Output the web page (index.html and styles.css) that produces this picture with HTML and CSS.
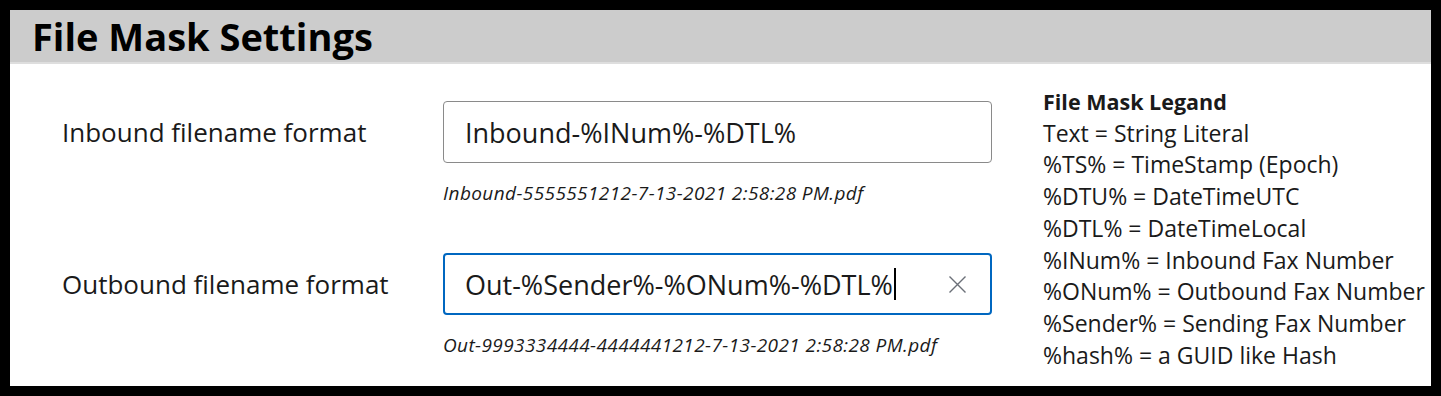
FILE: index.html
```html
<!DOCTYPE html>
<html lang="en">

<head>
    <meta charset="UTF-8" />
    <meta name="viewport" content="width=device-width, initial-scale=1.0" />
    <title>File Mask Settings</title>

    <link rel="stylesheet" href="styles.css">
</head>

<body>
    <div class="panel">
        <div class="panel-header">
            <h1>File Mask Settings</h1>
        </div>

        <div class="panel-body">
            <div class="form">
                <div class="row">
                    <label class="row-label">Inbound filename format</label>
                    <div class="field">
                        <div class="textbox">
                            <span class="textbox-value">Inbound-%INum%-%DTL%</span>
                        </div>
                        <div class="hint">Inbound-5555551212-7-13-2021 2:58:28 PM.pdf</div>
                    </div>
                </div>

                <div class="row">
                    <label class="row-label">Outbound filename format</label>
                    <div class="field">
                        <div class="textbox focused">
                            <span class="textbox-value">Out-%Sender%-%ONum%-%DTL%</span><span class="caret"></span>
                            <span class="clear">
                                <svg width="19" height="19" viewBox="0 0 19 19">
                                    <path d="M1.5 1.5 L17.5 17.5 M17.5 1.5 L1.5 17.5" stroke="#6b7078" stroke-width="1.4" fill="none" />
                                </svg>
                            </span>
                        </div>
                        <div class="hint">Out-9993334444-4444441212-7-13-2021 2:58:28 PM.pdf</div>
                    </div>
                </div>
            </div>

            <div class="legend">
                <div class="legend-title">File Mask Legand</div>
                <div>Text = String Literal</div>
                <div>%TS% = TimeStamp (Epoch)</div>
                <div>%DTU% = DateTimeUTC</div>
                <div>%DTL% = DateTimeLocal</div>
                <div>%INum% = Inbound Fax Number</div>
                <div>%ONum% = Outbound Fax Number</div>
                <div>%Sender% = Sending Fax Number</div>
                <div>%hash% = a GUID like Hash</div>
            </div>
        </div>
    </div>
</body>

</html>
```

FILE: styles.css
```css
body {
    margin: 0;
    background-color: #000;
    font-family: "Open Sans", "Noto Sans", sans-serif;
    color: #1a1a1a;
}

.panel {
    margin: 10px;
    width: 1421px;
    height: 376px;
    background: #fff;
}

.panel-header {
    height: 52px;
    background: #cccccc;
    border-bottom: 2px solid #dedede;
    display: flex;
    align-items: center;
    padding-left: 22px;
}

h1 {
    margin: 0;
    font-size: 38px;
    font-weight: bold;
    color: #000;
}

.panel-body {
    display: flex;
    padding-left: 52px;
}

.form {
    display: flex;
    flex-direction: column;
    gap: 48px;
    padding-top: 37px;
}

.row {
    display: grid;
    grid-template-columns: 381px 549px;
    align-items: start;
}

.row-label {
    height: 62px;
    display: flex;
    align-items: center;
    font-size: 26px;
}

.textbox {
    height: 62px;
    box-sizing: border-box;
    border: 1px solid #8a8a8a;
    border-radius: 4px;
    display: flex;
    align-items: center;
    padding-left: 21px;
    font-size: 27px;
}

.textbox.focused {
    border: 2px solid #0067c0;
    padding-left: 20px;
}

.caret {
    width: 2px;
    height: 32px;
    background: #000;
    margin-left: 1px;
}

.clear {
    margin-left: auto;
    margin-right: 23px;
    display: flex;
}

.hint {
    margin-top: 18px;
    font-size: 19px;
    font-style: italic;
    line-height: 24px;
    letter-spacing: 0.4px;
}

.legend {
    margin-left: 51px;
    padding-top: 22px;
    font-size: 23px;
    line-height: 31.7px;
    white-space: nowrap;
}

.legend-title {
    font-weight: bold;
    font-size: 21.5px;
}
```
